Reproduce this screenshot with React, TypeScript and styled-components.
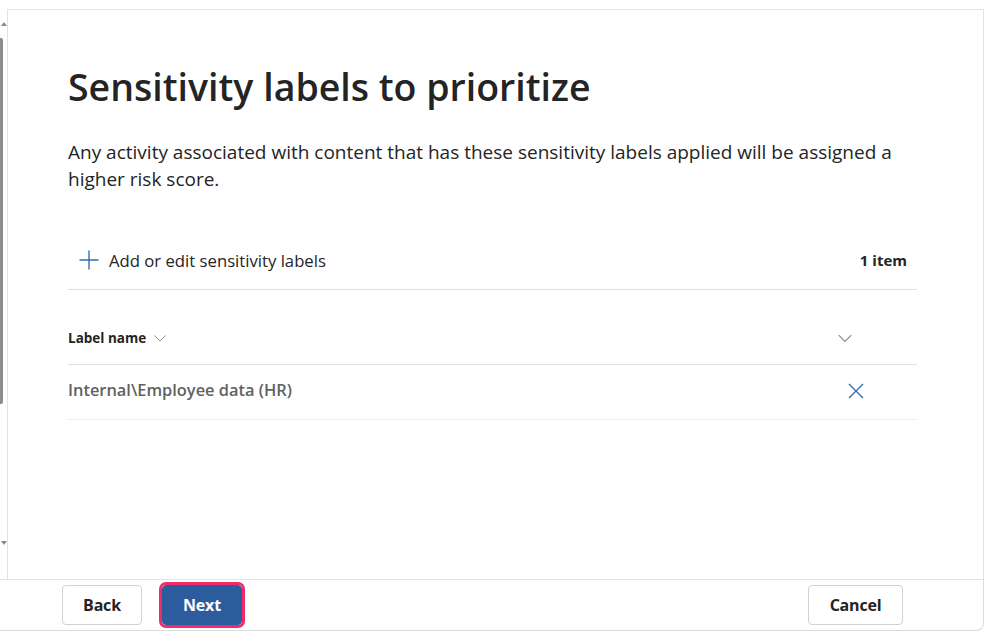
import React from "react";
import styled, { createGlobalStyle } from "styled-components";

const Global = createGlobalStyle`
  html, body { margin: 0; padding: 0; background: #ffffff; }
  body { font-family: "Open Sans", "Noto Sans", sans-serif; color: #242424; }
  * { box-sizing: border-box; }
`;

const Frame = styled.div`
  width: 984px;
  height: 634px;
  display: flex;
  flex-direction: column;
  overflow: hidden;
`;

const Upper = styled.div`
  display: flex;
  flex: 1;
  min-height: 0;
`;

const Rail = styled.div`
  width: 7px;
  display: flex;
  flex-direction: column;
  align-items: flex-start;
  padding-top: 22px;
`;

const Arrow = styled.div<{ $down?: boolean }>`
  width: 0;
  height: 0;
  margin-left: 1px;
  border-left: 3px solid transparent;
  border-right: 3px solid transparent;
  ${(p) =>
    p.$down
      ? "border-top: 4px solid #8a8a8a; margin-top: 137px;"
      : "border-bottom: 4px solid #8a8a8a;"}
`;

const Thumb = styled.div`
  width: 3px;
  height: 366px;
  margin-top: 12px;
  background: #8c8c8c;
  border-radius: 0 2px 2px 0;
`;

const Panel = styled.section`
  flex: 1;
  margin-top: 9px;
  border-top: 1px solid #e3e3e3;
  border-left: 1px solid #e3e3e3;
  border-right: 1px solid #e3e3e3;
  padding: 0 66px 0 60px;
  display: flex;
  flex-direction: column;
`;

const Title = styled.h1`
  margin: 51px 0 0;
  font-size: 37.5px;
  font-weight: 600;
  line-height: 52px;
  color: #242424;
`;

const Description = styled.p`
  margin: 26px 0 0;
  font-size: 19px;
  line-height: 27px;
  color: #242424;
  max-width: 840px;
`;

const CommandBar = styled.div`
  margin-top: 41px;
  height: 56px;
  display: flex;
  align-items: center;
  justify-content: space-between;
  border-bottom: 1px solid #e0e0e0;
  padding: 0 10px 3px 10px;
`;

const AddButton = styled.button`
  display: flex;
  align-items: center;
  gap: 9px;
  background: none;
  border: none;
  padding: 0;
  font-family: inherit;
  font-size: 16.7px;
  color: #242424;
  cursor: pointer;
`;

const Count = styled.span`
  font-size: 15px;
  font-weight: 700;
  color: #242424;
  margin-top: -1px;
`;

const HeaderRow = styled.div`
  margin-top: 24px;
  height: 51px;
  display: flex;
  align-items: center;
  justify-content: space-between;
  border-bottom: 1px solid #e0e0e0;
  padding: 0 64px 3px 0;
`;

const HeaderCell = styled.div`
  display: flex;
  align-items: center;
  gap: 7px;
  font-size: 13.5px;
  font-weight: 700;
  color: #242424;
`;

const DataRow = styled.div`
  height: 55px;
  display: flex;
  align-items: center;
  justify-content: space-between;
  border-bottom: 1px solid #ededed;
  padding: 0 52px 6px 0;
`;

const DataCell = styled.div`
  font-size: 16.4px;
  font-weight: 600;
  color: #616161;
`;

const IconButton = styled.button`
  background: none;
  border: none;
  padding: 0;
  display: flex;
  margin-top: 4px;
  cursor: pointer;
`;

const Footer = styled.footer`
  height: 52px;
  margin-bottom: 3px;
  border-top: 1px solid #e3e3e3;
  border-bottom: 1px solid #dcdcdc;
  border-right: 1px solid #dcdcdc;
  border-bottom-right-radius: 8px;
  display: flex;
  align-items: center;
  padding: 0 80px 0 62px;
  gap: 20px;
`;

const Button = styled.button<{ $primary?: boolean; $w: number }>`
  width: ${(p) => p.$w}px;
  height: 40px;
  border-radius: 4px;
  font-family: inherit;
  font-size: 16px;
  font-weight: 700;
  letter-spacing: -0.2px;
  cursor: pointer;
  ${(p) =>
    p.$primary
      ? `background: #2c5c9d; color: #ffffff; border: 1px solid #2c5c9d;
         outline: 3px solid #ee2d67; outline-offset: 0; border-radius: 4px;`
      : `background: #ffffff; color: #242424; border: 1px solid #d1d1d1;`}
`;

const Spacer = styled.div`
  flex: 1;
`;

const PlusIcon = () => (
  <svg width="22" height="22" viewBox="0 0 22 22">
    <path d="M11 1.5v19M1.5 11h19" stroke="#2f6fb5" strokeWidth="1.4" fill="none" />
  </svg>
);

const Chevron = ({ size = 14 }: { size?: number }) => (
  <svg width={size} height={size} viewBox="0 0 14 14">
    <path d="M1.5 4.5l5.5 5.5 5.5-5.5" stroke="#8a8a8a" strokeWidth="1" fill="none" />
  </svg>
);

const CloseIcon = () => (
  <svg width="18" height="18" viewBox="0 0 18 18">
    <path d="M2 2l14 14M16 2L2 16" stroke="#2f6fb5" strokeWidth="1.4" fill="none" />
  </svg>
);

export default function App() {
  return (
    <>
      <Global />
      <Frame>
        <Upper>
          <Rail>
            <Arrow />
            <Thumb />
            <Arrow $down />
          </Rail>
          <Panel>
            <Title>Sensitivity labels to prioritize</Title>
            <Description>
              Any activity associated with content that has these sensitivity labels applied will be
              assigned a higher risk score.
            </Description>
            <CommandBar>
              <AddButton>
                <PlusIcon />
                Add or edit sensitivity labels
              </AddButton>
              <Count>1 item</Count>
            </CommandBar>
            <HeaderRow>
              <HeaderCell>
                Label name
                <Chevron />
              </HeaderCell>
              <Chevron size={16} />
            </HeaderRow>
            <DataRow>
              <DataCell>Internal\Employee data (HR)</DataCell>
              <IconButton aria-label="Remove">
                <CloseIcon />
              </IconButton>
            </DataRow>
          </Panel>
        </Upper>
        <Footer>
          <Button $w={80}>Back</Button>
          <Button $w={80} $primary>
            Next
          </Button>
          <Spacer />
          <Button $w={95}>Cancel</Button>
        </Footer>
      </Frame>
    </>
  );
}
